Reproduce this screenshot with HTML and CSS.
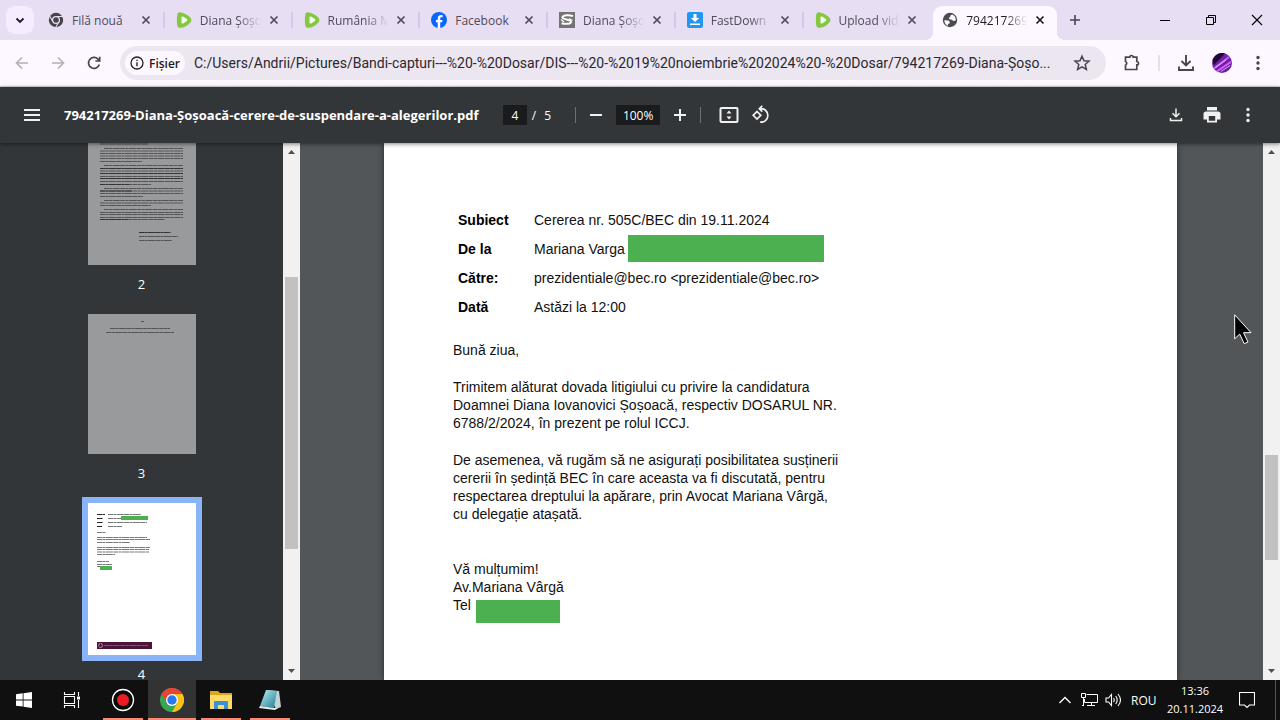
FILE: index.html
```html
<!DOCTYPE html>
<html lang="ro">
<head>
<meta charset="utf-8">
<title>794217269-Diana-Șoșoacă-cerere-de-suspendare-a-alegerilor.pdf</title>
<link rel="stylesheet" href="styles.css">
</head>
<body>
<svg class="defs" aria-hidden="true">
  <symbol id="close" viewBox="0 0 16 16"><path d="M4.500 4.500l7 7M11.500 4.500l-7 7" fill="none" stroke="currentColor" stroke-width="1.700"/></symbol>
  <symbol id="rumble" viewBox="0 0 16 16"><path d="M1.300 2.500C1.600.600 3 .100 5 .400c3.500.600 7.500 2.800 9.500 5.300 1.200 1.600 1.200 3.200 0 4.700-2 2.500-5.800 4.800-9.500 5.400-2 .300-3.400-.400-3.700-2.200C.700 10.500.700 6 1.300 2.500z" fill="#85c742"/><path d="M5.500 5.500c0-1 .8-1.400 1.600-.9l3.700 2.500c.7.500.7 1.300 0 1.800l-3.700 2.500c-.8.500-1.600.1-1.600-.9z" fill="#f1fbe6"/></symbol>
  <symbol id="up" viewBox="0 0 17 17"><path d="M5 11l3.500-4L12 11z" fill="#505050"/></symbol>
  <symbol id="down" viewBox="0 0 17 17"><path d="M5 6l3.500 4L12 6z" fill="#505050"/></symbol>
  <symbol id="dots" viewBox="0 0 20 20"><circle cx="10" cy="4.500" r="1.700"/><circle cx="10" cy="10" r="1.700"/><circle cx="10" cy="15.500" r="1.700"/></symbol>
</svg>

<header class="tabstrip">
  <button class="tab-search" aria-label="Caută file"><svg width="16" height="16" viewBox="0 0 16 16"><path d="M4.500 6.500L8 10l3.500-3.500" fill="none" stroke="#1f1b24" stroke-width="1.800"/></svg></button>
  <nav class="tabs">
    <div class="tab">
      <svg class="favicon" viewBox="0 0 16 16"><circle cx="8" cy="8" r="7.200" fill="#464349"/><path d="M8 4.500h7M5 9.700L1.600 4M11 9.700L7.700 15.200" stroke="#e7def4" stroke-width="1.100"/><circle cx="8" cy="8" r="3.400" fill="#464349" stroke="#e7def4" stroke-width="1.300"/></svg>
      <span class="tab-label">Filă nouă</span><button class="tab-close" aria-label="Închide"><svg><use href="#close"/></svg></button>
    </div>
    <div class="tab"><svg class="favicon"><use href="#rumble"/></svg><span class="tab-label faded">Diana Șoșo</span><button class="tab-close" aria-label="Închide"><svg><use href="#close"/></svg></button></div>
    <div class="tab"><svg class="favicon"><use href="#rumble"/></svg><span class="tab-label faded">Rumânia M</span><button class="tab-close" aria-label="Închide"><svg><use href="#close"/></svg></button></div>
    <div class="tab">
      <svg class="favicon" viewBox="0 0 16 16"><circle cx="8" cy="8" r="8" fill="#0866ff"/><path d="M6.700 15.900V10.300H4.900V7.900h1.800V6.700c0-2.500 1.100-3.700 3.500-3.700.5 0 1.100.1 1.400.2v2.100h-.9c-1.200 0-1.500.5-1.500 1.400v1.200h2.300l-.4 2.400H9.200v5.600z" fill="#fff"/></svg>
      <span class="tab-label">Facebook</span><button class="tab-close" aria-label="Închide"><svg><use href="#close"/></svg></button>
    </div>
    <div class="tab">
      <svg class="favicon" viewBox="0 0 16 16"><path fill="#737373" d="M0 0h16v16H0z"/><path d="M14 4.200C10 2.500 4 3 3.500 5.200 3 7.700 12 7.200 12 9.700c0 2.300-5 2.600-9.500 1.500" fill="none" stroke="#fff" stroke-width="2"/><path d="M2 7.500l3 2.500M13.500 8.500L10 6.500" stroke="#fff" stroke-width="1.300"/></svg>
      <span class="tab-label faded">Diana Șoșo</span><button class="tab-close" aria-label="Închide"><svg><use href="#close"/></svg></button>
    </div>
    <div class="tab">
      <svg class="favicon" viewBox="0 0 16 16"><rect width="16" height="16" rx="2" fill="#2196f3"/><path d="M6.500 2h3v4h2.700L8 10 3.800 6h2.700zM3 11.500h10V13H3z" fill="#fff"/></svg>
      <span class="tab-label faded">FastDown</span><button class="tab-close" aria-label="Închide"><svg><use href="#close"/></svg></button>
    </div>
    <div class="tab"><svg class="favicon"><use href="#rumble"/></svg><span class="tab-label faded">Upload vid</span><button class="tab-close" aria-label="Închide"><svg><use href="#close"/></svg></button></div>
    <div class="tab active">
      <svg class="favicon" viewBox="0 0 16 16"><circle cx="8" cy="8" r="7.200" fill="#4d4b50"/><path d="M2.300 8.300L6.500 8.500 8 10.300 7.300 11.500 6 12v1.800C3.800 13 2.300 10.900 2.300 8.300zM13.800 8.500L11.500 9 9.800 7.800 7.500 7.300 6.800 5.900 8.300 4.800 8.600 3.300 10.400 2.600C12.600 3.600 14 5.800 13.800 8.500z" fill="#fdf8ff"/></svg>
      <span class="tab-label faded">794217269</span><button class="tab-close" aria-label="Închide"><svg><use href="#close"/></svg></button>
    </div>
  </nav>
  <button class="new-tab" aria-label="Filă nouă"><svg width="16" height="16" viewBox="0 0 16 16"><path d="M8 3v10M3 8h10" stroke="#49454e" stroke-width="1.600"/></svg></button>
  <div class="window-controls">
    <button aria-label="Minimizează"><svg width="12" height="12" viewBox="0 0 12 12"><path d="M1 6.500h10" stroke="#000"/></svg></button>
    <button aria-label="Restaurează"><svg width="12" height="12" viewBox="0 0 12 12"><path d="M1.500 3.500h7v7h-7zM3.500 3V1.500h7v7H9" fill="none" stroke="#000"/></svg></button>
    <button aria-label="Închide"><svg width="12" height="12" viewBox="0 0 12 12"><path d="M1 1l10 10M11 1L1 11" stroke="#000" stroke-width="1.100"/></svg></button>
  </div>
</header>

<div class="toolbar">
  <button class="nav-btn off" aria-label="Înapoi"><svg viewBox="0 0 20 20"><path d="M16 10H5M10 4.500L4.500 10l5.500 5.500"/></svg></button>
  <button class="nav-btn off" aria-label="Înainte"><svg viewBox="0 0 20 20"><path d="M4 10h11M10 4.500l5.500 5.500-5.500 5.500"/></svg></button>
  <button class="nav-btn" aria-label="Reîncarcă"><svg viewBox="0 0 20 20"><path d="M15.300 11.500A5.500 5.500 0 1 1 14 6.100l1.500 1.600M15.700 3.800V8h-4.300"/></svg></button>
  <div class="omnibox">
    <button class="chip"><svg width="14" height="14" viewBox="0 0 14 14"><circle cx="7" cy="7" r="6" fill="none" stroke="#222" stroke-width="1.300"/><path d="M7 6.200v4M7 3.700v1.400" stroke="#222" stroke-width="1.400"/></svg>Fișier</button>
    <input class="url" aria-label="Adresă" value="C:/Users/Andrii/Pictures/Bandi-capturi---%20-%20Dosar/DIS---%20-%2019%20noiembrie%202024%20-%20Dosar/794217269-Diana-Șoșo...">
    <button class="star" aria-label="Marcaj"><svg width="18" height="18" viewBox="0 0 18 18"><path d="M9 2.200l2 4.600 5 .4-3.800 3.300 1.200 4.900L9 12.800l-4.400 2.600 1.200-4.900L2 7.200l5-.4z" fill="none" stroke="#49454e" stroke-width="1.500"/></svg></button>
  </div>
  <div class="actions">
    <button class="nav-btn" aria-label="Extensii"><svg viewBox="0 0 20 20"><path d="M3.500 4.200h4.300a1.700 1.700 0 0 1 3.400 0h3.600v4.300a1.700 1.700 0 0 1 0 3.400v4.600H3.500v-4.300a2 2 0 0 0 0-3.700z"/></svg></button>
    <span class="sep"></span>
    <button class="nav-btn" aria-label="Descărcări"><svg viewBox="0 0 20 20"><path d="M10 2v10M5.500 8l4.500 4.500L14.500 8M3 13.500V17h14v-3.500" stroke-width="1.900"/></svg></button>
    <button class="nav-btn" aria-label="Profil"><svg viewBox="0 0 20 20"><circle cx="10" cy="10" r="10" fill="#6a23a5" stroke="none"/><path d="M.5 7C3 1 8-1 13 .500L2 12z" fill="#210536" stroke="none"/><path d="M2 15.500L17 4M5 18.300l14-9.500" stroke="#d35bff" stroke-width="2"/><path d="M3.500 14.500L14 7M9 18.500l9-6" stroke="#f5bfff" stroke-width=".8"/></svg></button>
    <button class="nav-btn" aria-label="Meniu"><svg class="solid"><use href="#dots"/></svg></button>
  </div>
</div>

<div class="pdfbar">
  <div class="pdf-left">
    <button class="menu" aria-label="Meniu"><svg width="16" height="12" viewBox="0 0 16 12"><path d="M0 1h16M0 6h16M0 11h16" stroke="#f1f1f1" stroke-width="2"/></svg></button>
    <h1>794217269-Diana-Șoșoacă-cerere-de-suspendare-a-alegerilor.pdf</h1>
  </div>
  <div class="pdf-center">
    <input class="page-no" aria-label="Pagina" value="4"><span class="of">/</span><span class="total">5</span>
    <span class="bar-sep"></span>
    <button class="pdf-btn" aria-label="Micșorează"><svg viewBox="0 0 20 20"><path d="M4 10h12"/></svg></button>
    <input class="zoom" aria-label="Zoom" value="100%">
    <button class="pdf-btn" aria-label="Mărește"><svg viewBox="0 0 20 20"><path d="M4 10h12M10 4v12"/></svg></button>
    <span class="bar-sep"></span>
    <button class="pdf-btn fit" aria-label="Încadrează"><svg viewBox="0 0 20 20"><rect x="1.500" y="3" width="17" height="14" rx="1"/><path d="M7.500 8.500L10 5.500l2.500 3zM7.500 11.500l2.500 3 2.500-3z" fill="#f1f1f1" stroke="none"/></svg></button>
    <button class="pdf-btn" aria-label="Rotește"><svg viewBox="0 0 20 20"><path d="M6 6.500L9.800 10.300 6 14.100 2.200 10.300zM9 3.800a6.700 6.700 0 1 1 0 13.200M11.300.900L8.300 3.800l3 2.900" stroke-width="1.700"/></svg></button>
  </div>
  <div class="pdf-right">
    <button class="pdf-btn" aria-label="Descarcă"><svg viewBox="0 0 20 20"><path d="M10 3.500v8M6.500 8.200L10 11.700l3.500-3.500M4.500 13v2.500h11V13" stroke-width="1.500"/></svg></button>
    <button class="pdf-btn" aria-label="Tipărește"><svg viewBox="0 0 20 20"><path d="M5 2h10v3.500H5zM4 6.500h12a2.500 2.500 0 0 1 2.500 2.500v5.500H15V17.500H5V14.500H1.500V9A2.500 2.500 0 0 1 4 6.500zM6.800 11v4.800h6.400V11z" fill="#f1f1f1" fill-rule="evenodd" stroke="none"/></svg></button>
    <button class="pdf-btn" aria-label="Mai multe"><svg class="solid"><use href="#dots"/></svg></button>
  </div>
</div>

<main class="workspace">
  <aside class="sidebar">
    <ol class="thumbs">
      <li><div class="thumb">
        <svg viewBox="0 0 108 140" class="lines"><path d="M12 19h48M16 23.500h79M12 26h83M12 28.500h83M12 31h83M12 33.500h83M12 36.500h42M16 40.500h79M12 43.500h83M12 46h83M12 48.500h83M12 51.500h83M12 53.500h83M12 56.500h83M12 59.500h51M16 63.500h79M12 66h83M12 68.500h83M12 71.500h43M16 75.500h79M12 78h83M12 80.500h51M16 84.500h79M12 87.500h83M12 89.500h83M12 92.500h83M12 94.500h65M51 107.500h32M51 111.500h39M51 115.500h33"/><path class="heavy" d="M12 43.500h83M12 48.500h83M12 53.500h83M12 59.500h29M12 66h32M12 94.500h28M51 107.500h30"/></svg>
      </div><span>2</span></li>
      <li><div class="thumb">
        <svg viewBox="0 0 108 140" class="lines"><path d="M53 7.500h3M22 14.500h60M18 18.500h68"/></svg>
      </div><span>3</span></li>
      <li><div class="thumb current">
        <svg viewBox="0 0 108 152" class="lines"><path class="heavy" d="M9 11.500h8M9 15.500h6M9 19.500h6M9 23.500h5"/><path d="M20 11.500h33M20 15.500h13M20 19.500h39M20 23.500h14M9 29.500h9M9 34.500h50M9 36.500h53M9 39.500h33M9 44.500h53M9 46.500h52M9 49h52M9 51.500h18M9 58.500h12M9 61.500h15M9 63.500h3"/><path class="green" d="M33 13h27v4H33zM12 63h12v4H12z"/><path fill="#4d1439" stroke="none" d="M9 139h55v7H9z"/><circle cx="12.500" cy="142.500" r="2" fill="none" stroke="#d7bcd0" stroke-width=".7"/><path d="M16 142.500h44" stroke="#9b5e83"/></svg>
      </div><span>4</span></li>
    </ol>
  </aside>
  <div class="scroll side-scroll"><svg><use href="#up"/></svg><div class="track"><div class="grip"></div></div><svg><use href="#down"/></svg></div>

  <section class="viewer">
    <article class="page">
      <table class="headers">
        <tr><th>Subiect</th><td>Cererea nr. 505C/BEC din 19.11.2024</td></tr>
        <tr><th>De la</th><td><div class="masked-row">Mariana Varga<span class="mask"></span></div></td></tr>
        <tr><th>Către:</th><td>prezidentiale@bec.ro &lt;prezidentiale@bec.ro&gt;</td></tr>
        <tr><th>Dată</th><td>Astăzi la 12:00</td></tr>
      </table>
      <p>Bună ziua,</p>
      <p>Trimitem alăturat dovada litigiului cu privire la candidatura<br>Doamnei Diana Iovanovici Șoșoacă, respectiv DOSARUL NR.<br>6788/2/2024, în prezent pe rolul ICCJ.</p>
      <p>De asemenea, vă rugăm să ne asigurați posibilitatea susținerii<br>cererii în ședință BEC în care aceasta va fi discutată, pentru<br>respectarea dreptului la apărare, prin Avocat Mariana Vârgă,<br>cu delegație atașată.</p>
      <div class="signature">
        <div>Vă mulțumim!</div>
        <div>Av.Mariana Vârgă</div>
        <div class="phone">Tel<span class="mask short"></span></div>
      </div>
    </article>
    <svg class="cursor" width="18" height="32" viewBox="0 0 18 32"><path d="M.7.800v24l5-4.700 4.500 9.600 3.800-1.700-4.500-9.300h7.500z" fill="#000" stroke="#fff"/></svg>
  </section>
  <div class="scroll main-scroll"><svg><use href="#up"/></svg><div class="track"><div class="grip"></div></div><svg><use href="#down"/></svg></div>
</main>

<footer class="taskbar">
  <button class="task" aria-label="Start"><svg width="16" height="16" viewBox="0 0 16 16"><path d="M0 2.300L6.700 1.300V7.500H0zM7.500 1.200L16 0v7.500H7.500zM0 8.400h6.700v6.200L0 13.700zM7.500 8.400H16V16L7.500 14.800z" fill="#fff"/></svg></button>
  <button class="task" aria-label="Vizualizare activități"><svg width="18" height="16" viewBox="0 0 18 16"><path d="M1.500 4.500h10v7h-10zM1.500 0v2.500h10V0M1.500 16v-2.500h10V16M15.500 0v4M15.500 8v8" fill="none" stroke="#fff" stroke-width="1.100"/><path d="M14 4.500h3v3h-3z" fill="#fff"/></svg></button>
  <div class="apps">
    <button class="task open" aria-label="Bandicam"><svg width="24" height="24" viewBox="0 0 24 24"><circle cx="12" cy="12" r="10.500" fill="#080808" stroke="#fff" stroke-width="1.300"/><circle cx="12" cy="12" r="6" fill="#ec1c24"/></svg></button>
    <button class="task open focused" aria-label="Google Chrome"><svg width="24" height="24" viewBox="0 0 24 24"><circle cx="12" cy="12" r="12" fill="#34a853"/><path d="M12 6h10.400A12 12 0 0 1 12 24l5.200-9z" fill="#fbc116"/><path d="M12 6h10.400A12 12 0 0 0 1.600 6l5.200 9z" fill="#ea4335"/><circle cx="12" cy="12" r="6" fill="#fff"/><circle cx="12" cy="12" r="4.700" fill="#2979ee"/></svg></button>
    <button class="task open" aria-label="Explorer"><svg width="22" height="20" viewBox="0 0 22 20"><path d="M0 1h8l2 2h12v6H0z" fill="#dca51c"/><path d="M0 5h22v14H0z" fill="#fddb68"/><path d="M4 19v-7q0-1 1-1h12q1 0 1 1v7h-4v-4H8v4z" fill="#3992d4"/></svg></button>
    <button class="task open" aria-label="Notepad"><svg width="24" height="22" viewBox="0 0 24 22"><defs><linearGradient id="note" x2="1" y2="1"><stop stop-color="#c4edf1"/><stop offset=".5" stop-color="#69b7c4"/><stop offset="1" stop-color="#247b8f"/></linearGradient></defs><path d="M8 1l13 1 2 16-5 2z" fill="#c3d3d6"/><path d="M8 1l11 1-3 17-14-2z" fill="url(#note)"/><path d="M2 17l14 2 4 0-3 2L1 19z" fill="#eee"/></svg></button>
  </div>
  <div class="tray">
    <button aria-label="Pictograme ascunse"><svg width="12" height="8" viewBox="0 0 12 8"><path d="M.5 7L6 1.500 11.500 7" fill="none" stroke="#fff" stroke-width="1.300"/></svg></button>
    <button aria-label="Rețea"><svg width="17" height="14" viewBox="0 0 17 14"><path d="M5.500 1.500h11v8h-13V6M.5.500h4v4h-4zM2.500 4.500V12M10.500 9.500v3M6 12.500h8M1 12.500h2" fill="none" stroke="#fff"/></svg></button>
    <button aria-label="Volum"><svg width="17" height="14" viewBox="0 0 17 14"><path d="M1 5h2.500L6.500 1.500v11L3.500 9H1zM8.500 5q1.500 2 0 4M10.700 3q3 4 0 8M13 1q5 6 0 12" fill="none" stroke="#fff" stroke-width="1.100"/></svg></button>
    <span class="lang">ROU</span>
    <time class="clock">13:36<br>20.11.2024</time>
    <button class="notice" aria-label="Notificări"><svg width="16" height="17" viewBox="0 0 16 17"><path d="M.5.500h15v12.500h-5L8 15.500 5.500 13h-5z" fill="none" stroke="#fff" stroke-width="1.100"/></svg></button>
    <span class="desktop-edge"></span>
  </div>
</footer>
</body>
</html>
```
FILE: styles.css
```css
* { box-sizing: border-box; }
body {
  margin: 0;
  height: 100vh;
  display: flex;
  flex-direction: column;
  overflow: hidden;
  font-family: "Open Sans", "Noto Sans", sans-serif;
  font-size: 12px;
  color: #1f1b24;
}
button {
  display: flex;
  align-items: center;
  justify-content: center;
  flex: none;
  padding: 0;
  border: 0;
  background: none;
  font: inherit;
  color: inherit;
}
input { border: 0; padding: 0; min-width: 0; font: inherit; color: inherit; outline: 0; }
svg { display: block; flex: none; }
.defs { position: absolute; width: 0; height: 0; }

/* Tab strip */
.tabstrip { display: flex; align-items: center; height: 40px; flex: none; background: #e7def4; padding-left: 6px; }
.tab-search { width: 28px; height: 28px; border-radius: 9px; background: #f5edfd; margin-right: 3px; }
.tabs { display: flex; flex: 0 1 1024px; min-width: 0; align-self: stretch; align-items: flex-end; }
.tab { position: relative; display: flex; align-items: center; flex: 1 1 0; min-width: 0; height: 34px; padding: 0 11px 6px; color: #514b58; }
.tab::after { content: ""; position: absolute; right: 0; top: 6px; width: 2px; height: 16px; background: #d6c5f2; }
.favicon { width: 16px; height: 16px; margin-right: 8px; }
.tab-label { flex: 1; min-width: 0; overflow: hidden; white-space: nowrap; margin-right: 2px; }
.tab-label.faded { -webkit-mask-image: linear-gradient(90deg, #000 60%, transparent 96%); mask-image: linear-gradient(90deg, #000 60%, transparent 96%); }
.tab-close svg { width: 16px; height: 16px; }
.tab.active { background: #fdf8ff; border-radius: 9px 9px 0 0; color: #1f1b24; margin-right: 4px; margin-left: 2px; padding-left: 9px; padding-right: 9px; }
.tab.active::before, .tab.active::after { content: ""; position: absolute; top: auto; bottom: 0; width: 8px; height: 8px; background: radial-gradient(circle at 0 0, transparent 8px, #fdf8ff 8px); }
.tab.active::before { left: -8px; }
.tab.active::after { right: -8px; background: radial-gradient(circle at 100% 0, transparent 8px, #fdf8ff 8px); }
.tab:nth-child(7)::after { display: none; }
.new-tab { width: 28px; height: 28px; }
.window-controls { display: flex; margin-left: auto; }
.window-controls button { width: 46px; height: 40px; }

/* Browser toolbar */
.toolbar { display: flex; align-items: center; height: 47px; flex: none; padding: 0 4px; background: #fdf8ff; border-bottom: 1px solid #dcd6e2; }
.nav-btn { width: 36px; height: 34px; }
.nav-btn svg { width: 20px; height: 20px; fill: none; stroke: #49454e; stroke-width: 1.7; }
.nav-btn svg.solid { fill: #49454e; stroke: none; }
.nav-btn.off svg { stroke: #b4afb8; }
.omnibox { display: flex; align-items: center; flex: 1; min-width: 0; height: 34px; margin-left: 8px; padding: 0 15px 0 5px; border-radius: 17px; background: #ece6f1; }
.chip { gap: 5px; width: 60px; height: 24px; border-radius: 12px; background: #fdf8ff; font-weight: 600; margin-right: 9px; }
.url { flex: 1; background: none; font-family: Roboto, "Open Sans", sans-serif; font-size: 14px; color: #2b2730; }
.actions { display: flex; align-items: center; margin-left: 8px; }
.sep { width: 2px; height: 16px; background: #e7def4; margin: 0 8px; }

/* PDF toolbar */
.pdfbar { display: grid; grid-template-columns: 1fr auto 1fr; align-items: center; height: 56px; flex: none; background: #323639; color: #fff; position: relative; z-index: 1; box-shadow: 0 1px 4px rgba(0, 0, 0, .5); }
.pdf-left { display: flex; align-items: center; padding-left: 24px; gap: 24px; min-width: 0; }
.pdf-left h1 { margin: 0; font-size: 13px; font-weight: 700; white-space: nowrap; }
.pdf-center { display: flex; align-items: center; font-size: 12px; }
.pdf-center input { height: 20px; background: #191b1c; text-align: center; }
.page-no { width: 24px; }
.zoom { width: 44px; margin: 0 4px; }
.of { margin-left: 5px; }
.total { margin: 0 24px 0 8px; }
.bar-sep { width: 1px; height: 16px; background: #6d7073; margin: 0 4px 0 0; }
.pdf-btn + .bar-sep { margin: 0 12px 0 4px; }
.pdf-btn { width: 32px; height: 32px; }
.pdf-btn svg { width: 20px; height: 20px; fill: none; stroke: #f1f1f1; stroke-width: 2; }
.pdf-btn svg.solid { fill: #f1f1f1; stroke: none; }
.pdf-right { display: flex; justify-content: flex-end; gap: 4px; padding-right: 16px; }

/* Workspace */
.workspace { display: flex; flex: 1; min-height: 0; background: #525659; }
.sidebar { width: 283px; flex: none; overflow: hidden; background: #323639; color: #fff; }
.thumbs { display: flex; flex-direction: column; align-items: center; list-style: none; margin: -18px 0 0; padding: 0; }
.thumbs li { display: flex; flex-direction: column; align-items: center; }
.thumbs span { height: 49px; padding-top: 10px; line-height: 18px; font-size: 13px; }
.thumb { width: 108px; background: #999a9c; }
.thumb.current { background: #fff; box-shadow: 0 0 0 6px #8ab4f8; }
.lines { width: 100%; fill: none; stroke: #333436; stroke-width: .8; stroke-dasharray: 5 .4 3 .4 7 .4; opacity: .85; }
.lines .heavy { stroke: #222; stroke-width: 1.1; }
.lines .green { fill: #4caf50; stroke: none; }
.current .lines { opacity: 1; stroke: #555; }

.scroll { display: flex; flex-direction: column; width: 17px; flex: none; background: #f1f1f1; }
.scroll svg { width: 17px; height: 17px; }
.track { display: flex; flex-direction: column; flex: 1; padding: 0 2px; }
.track::before, .track::after { content: ""; }
.grip { background: #c1c1c1; }
.side-scroll .track::before { flex: 117; }
.side-scroll .grip { flex: 272; }
.side-scroll .track::after { flex: 114; }
.main-scroll .track::before { flex: 295; }
.main-scroll .grip { flex: 105; }
.main-scroll .track::after { flex: 103; }

.viewer { position: relative; display: flex; justify-content: center; flex: 1; min-width: 0; overflow: hidden; padding-right: 2px; }
.page { width: 793px; min-height: 100%; padding: 62px 69px; background: #fff; box-shadow: 0 0 6px rgba(0, 0, 0, .5); font-family: "Liberation Sans", Arial, sans-serif; font-size: 14px; line-height: 18px; color: #111; }
.headers { border-collapse: collapse; margin-bottom: 20px; }
.headers th { width: 81px; padding: 0 0 0 5px; text-align: left; color: #000; }
.headers td { padding: 0; height: 29px; }
.masked-row, .phone { display: flex; align-items: center; }
.mask { width: 196px; height: 27px; margin-left: 3px; background: #4caf50; }
.mask.short { width: 84px; height: 23px; margin: 4px 0 0 5px; }
.page p { margin: 0 0 19px; }
.signature { margin-top: 37px; }
.phone { align-items: flex-start; }
.cursor { position: absolute; right: 11px; top: 171px; }

/* Taskbar */
.taskbar { display: flex; height: 40px; flex: none; background: #101010; color: #fff; font-size: 11px; }
.task { width: 48px; height: 40px; position: relative; }
.apps { display: flex; gap: 1px; margin-left: 3px; }
.task.open::after { content: ""; position: absolute; left: 4px; right: 4px; bottom: 0; height: 2px; background: #fb8972; }
.task.focused { background: #333; }
.task.focused::after { left: 0; right: 0; }
.tray { display: flex; align-items: center; margin-left: auto; }
.tray button { width: 24px; height: 40px; }
.lang { margin-left: 6px; width: 36px; font-size: 12px; }
.clock { width: 56px; text-align: center; line-height: 18px; white-space: nowrap; }
.tray .notice { width: 48px; }
.desktop-edge { width: 5px; height: 40px; border-left: 1px solid #555; margin-left: 4px; }
```
